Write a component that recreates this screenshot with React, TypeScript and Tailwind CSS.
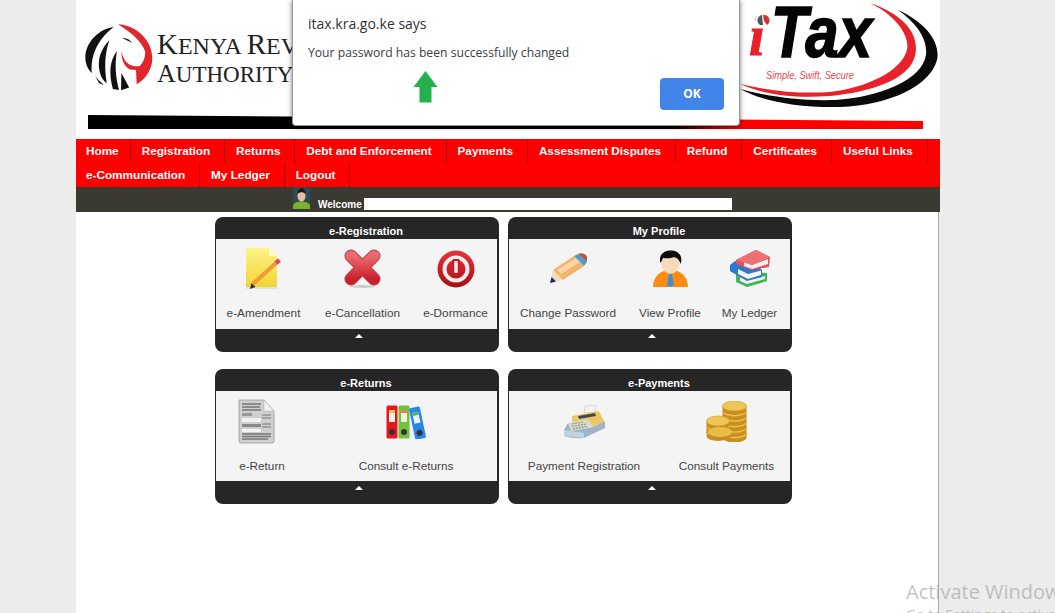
const navItems = [
  "Home",
  "Registration",
  "Returns",
  "Debt and Enforcement",
  "Payments",
  "Assessment Disputes",
  "Refund",
  "Certificates",
  "Useful Links",
  "e-Communication",
  "My Ledger",
  "Logout",
];

const KraLion = () => (
  <svg width="68" height="68" viewBox="28 68 200 200" className="shrink-0">
    <path
      d="M125,72 C180,75 226,120 226,172 C226,205 205,235 180,248 L178,206 L160,205 C145,195 135,180 135,150 C142,185 160,197 188,195 C200,185 205,170 205,152 C195,125 170,100 125,72 Z"
      fill="#e1252b"
    />
    <path d="M112,80 C70,85 29,125 29,170 C29,190 38,205 48,215 C45,175 55,125 112,80 Z" fill="#111" />
    <path d="M100,118 C75,145 62,175 72,215 C75,228 82,238 92,245 C85,200 85,160 100,118 Z" fill="#111" />
    <path d="M122,150 C100,180 98,215 110,262 L128,265 C118,225 115,190 122,150 Z" fill="#111" />
    <path d="M135,215 L134,266 L158,258 Z" fill="#111" />
    <path d="M58,225 L70,245 L84,250 C72,240 64,232 58,225 Z" fill="#111" />
    <path d="M138,112 C150,112 160,116 166,127 C156,120 148,118 138,112 Z" fill="#111" />
  </svg>
);

const ItaxLogo = () => (
  <svg width="200" height="115" viewBox="0 0 200 115" className="shrink-0">
    <path
      d="M130,3 C165,15 180,35 175,56 C169,80 130,92 90,96 C50,99 20,93 0,84 C30,91 60,94 90,92 C125,88 161,72 167,50 C170,35 155,15 130,3 Z"
      fill="#e8212b"
    />
    <path
      d="M158,10 C185,22 201,42 197,60 C190,86 150,105 100,107 C55,108 20,100 0,89 C30,97 60,101 95,100 C140,97 182,80 186,55 C188,38 175,22 158,10 Z"
      fill="#0a0a0a"
    />
    <text
      x="31"
      y="57"
      textLength="101"
      lengthAdjust="spacingAndGlyphs"
      fontSize="73"
      fontWeight="700"
      fontStyle="italic"
      fontFamily="'Liberation Sans', sans-serif"
      fill="#050505"
      stroke="#050505"
      strokeWidth="1.6"
    >
      Tax
    </text>
    <text
      x="9"
      y="55"
      fontSize="56"
      fontWeight="700"
      fontStyle="italic"
      fontFamily="'Liberation Serif', serif"
      fill="#e8212b"
      stroke="#e8212b"
      strokeWidth="1"
    >
      i
    </text>
    <circle cx="23" cy="20" r="7.5" fill="#fff" />
    <path d="M23,15 A5.5,5.5 0 0 1 27,25 L24,21 Z" fill="#c33" />
    <path d="M22,15 A5.5,5.5 0 0 0 20,25 L23,25 Z" fill="#555" />
    <text
      x="26"
      y="79"
      fontSize="10.5"
      fontStyle="italic"
      fontFamily="'Liberation Sans', sans-serif"
      fill="#e8454c"
      textLength="88"
      lengthAdjust="spacingAndGlyphs"
    >
      Simple, Swift, Secure
    </text>
  </svg>
);

const HeaderBar = () => (
  <svg width="836" height="16" viewBox="0 0 836 16" className="ml-[11px] block">
    <defs>
      <linearGradient id="barFill" x1="0" x2="1" y1="0" y2="0">
        <stop offset="0.7" stopColor="#000" />
        <stop offset="0.77" stopColor="#ff0000" />
        <stop offset="1" stopColor="#ff0000" />
      </linearGradient>
    </defs>
    <polygon points="1,0 836,6 836,14 1,14" fill="url(#barFill)" />
  </svg>
);

const NoteIcon = () => (
  <svg width="37" height="43" viewBox="0 0 37 43">
    <defs>
      <linearGradient id="noteFill" x1="0" x2="0" y1="0" y2="1">
        <stop offset="0" stopColor="#fdf38a" />
        <stop offset="1" stopColor="#f3d531" />
      </linearGradient>
    </defs>
    <path d="M1,1 H24 L32,9 V40 H1 Z" fill="url(#noteFill)" />
    <path d="M24,1 L32,9 H24 Z" fill="#fff9c4" />
    <path d="M1,41 H33" stroke="#ddd" strokeWidth="1.5" />
    <path d="M8,37 L32,15" stroke="#f29a38" strokeWidth="4" />
    <path d="M31,16 L34.5,13" stroke="#d8505c" strokeWidth="4.5" />
    <path d="M5,42 L6.5,36 L10.5,40 Z" fill="#333" />
  </svg>
);

const CrossIcon = () => (
  <svg width="37" height="39" viewBox="0 0 37 39">
    <defs>
      <linearGradient id="crossFill" x1="0" x2="0" y1="0" y2="1">
        <stop offset="0" stopColor="#ec6a70" />
        <stop offset="1" stopColor="#c9222c" />
      </linearGradient>
    </defs>
    <ellipse cx="18.5" cy="37.5" rx="13" ry="1.5" fill="#ccc" />
    <path d="M7,7 L30,30 M30,7 L7,30" stroke="#bb3a40" strokeWidth="13" strokeLinecap="round" />
    <path d="M7,7 L30,30 M30,7 L7,30" stroke="url(#crossFill)" strokeWidth="11" strokeLinecap="round" />
  </svg>
);

const PowerIcon = () => (
  <svg width="38" height="38" viewBox="0 0 38 38">
    <defs>
      <linearGradient id="powerFill" x1="0" x2="0" y1="0" y2="1">
        <stop offset="0" stopColor="#e8333a" />
        <stop offset="1" stopColor="#a50f14" />
      </linearGradient>
    </defs>
    <circle cx="19" cy="19" r="18.5" fill="url(#powerFill)" />
    <circle cx="19" cy="19" r="11.5" fill="none" stroke="#f8eeee" strokeWidth="4" />
    <rect x="15.5" y="9" width="7" height="15" rx="1" fill="#c21a20" />
    <rect x="17.2" y="11" width="3.6" height="12" rx="1" fill="#fbeaea" />
  </svg>
);

const PencilIcon = () => (
  <svg width="37" height="31" viewBox="0 0 37 31">
    <path d="M0,30 L3,17 L13,27 Z" fill="#f5dcb8" />
    <path d="M0,30 L1.5,24 L6,28.5 Z" fill="#1e2a5a" />
    <path d="M3,17 L24,3 L34,13 L13,27 Z" fill="#f4b36a" />
    <path d="M7,17 L26,5 L30,9 L11,21 Z" fill="#fbd5a2" />
    <path d="M24,3 L28,1 L37,9 L34,13 Z" fill="#4d9ad8" />
    <path d="M28,1 C32,-1 36,1 37,4 C37,6 37,8 37,9 Z" fill="#b5563c" />
  </svg>
);

const PersonIcon = () => (
  <svg width="35" height="38" viewBox="0 0 35 38">
    <path d="M0,37 C0,27 7,20 17.5,20 C28,20 35,27 35,37 Z" fill="#ff8a10" />
    <path d="M14,20 L21,20 L19,24 L21,35 L17.5,37 L14,35 L16,24 Z" fill="#3f8fd8" />
    <ellipse cx="17.5" cy="14" rx="9" ry="10" fill="#f6d9bb" />
    <path d="M7.5,13 C5,4 12,0 19,0.5 C27,1 30,8 27.5,14 C26,9 24,8 21,7 C17,9 12,8 10,8 C9,10 8.5,12 7.5,13 Z" fill="#0b0b0b" />
  </svg>
);

const BooksIcon = () => (
  <svg width="41" height="37" viewBox="0 0 41 37">
    <path d="M7,24 L11,21 L38,23 L38,31 L18,37 L7,32 Z" fill="#3db55a" />
    <path d="M11,27 L18,30 L36,26 V29 L18,34 L11,31 Z" fill="#eef3ee" />
    <path d="M1,15 L6,11 L30,17 L33,20 L33,27 L18,31 L1,21 Z" fill="#2a78cf" />
    <path d="M9,19 L19,24 L32,20.5 V25 L19,29 L9,24 Z" fill="#f3f5f8" />
    <path d="M7,10 L27,0 L41,7 L40,17 L22,20 L7,14 Z" fill="#e2505a" />
    <path d="M15,12 L23,15 L39,9 V14 L23,19 L15,16 Z" fill="#f7eeee" />
    <path d="M7,10 L27,0 L41,7 L23,15 Z" fill="#ef6f75" />
  </svg>
);

const DocumentIcon = () => (
  <svg width="37" height="45" viewBox="0 0 37 45">
    <path d="M1,1 H26 L36,12 V42 Q36,44 34,44 H3 Q1,44 1,42 Z" fill="#cfcfcf" stroke="#999" strokeWidth="0.8" />
    <path d="M26,1 L36,12 H26 Z" fill="#f2f2f2" stroke="#aaa" strokeWidth="0.5" />
    <path d="M4,5 H23 M4,8 H22 M4,11 H23" stroke="#777" strokeWidth="1.4" />
    <rect x="4" y="14" width="10" height="3" fill="#999" />
    <rect x="4" y="19" width="19" height="4" fill="#f2f2f2" />
    <rect x="4" y="25" width="19" height="3" fill="#888" />
    <rect x="4" y="30" width="19" height="3" fill="#f4f4f4" />
    <path d="M24,16 H33 M24,19 H33 M24,25 H33 M24,28 H33" stroke="#777" strokeWidth="1.2" />
    <path d="M4,35 H33 M4,37.5 H33 M4,40 H30" stroke="#777" strokeWidth="1.4" />
  </svg>
);

const BindersIcon = () => (
  <svg width="40" height="34" viewBox="0 0 40 34">
    <rect x="0.5" y="0.5" width="11" height="33" rx="1.5" fill="#e8161c" />
    <rect x="3" y="5" width="6" height="12" fill="#f4efe6" />
    <rect x="3" y="5" width="6" height="3" fill="#f4c050" />
    <circle cx="6" cy="27" r="3" fill="#333" />
    <rect x="12.5" y="0.5" width="11" height="33" rx="1.5" fill="#6fc43a" />
    <rect x="15" y="5" width="6" height="12" fill="#f1f1e8" />
    <rect x="15" y="5" width="6" height="3" fill="#ef7a60" />
    <circle cx="18" cy="27" r="3" fill="#333" />
    <g transform="rotate(-12 32 18)">
      <rect x="26" y="2" width="11" height="32" rx="1.5" fill="#2a86ea" />
      <rect x="28.5" y="7" width="6" height="11" fill="#eef3f4" />
      <rect x="28.5" y="7" width="6" height="3" fill="#52b848" />
      <circle cx="31.5" cy="28" r="3" fill="#333" />
    </g>
  </svg>
);

const RegisterIcon = () => (
  <svg width="41" height="34" viewBox="0 0 41 34">
    <path d="M20,8 L21,1 L32,0 L31,7 Z" fill="#f2f2ea" stroke="#bbb" strokeWidth="0.5" />
    <path d="M8,11 L35,6 L40,16 L40,22 L8,24 Z" fill="#ecc765" />
    <path d="M14,11 L31,8 L32,11 L15,14 Z" fill="#3e4a50" />
    <path d="M4,18 L24,14 L30,23 L6,27 Z" fill="#d8dcc8" />
    <path d="M8,19 L20,17 M8,21.5 L22,19 M9,24 L24,21" stroke="#8a9590" strokeWidth="1.2" strokeDasharray="2 1" />
    <path d="M0,25 L4,18 L7,26 L30,22 L41,16 V23 L20,33 Q8,34 0,31 Z" fill="#9cb4cc" />
    <path d="M0,31 V25 L20,28 V33 Z" fill="#c2d2e0" />
  </svg>
);

const CoinStack = ({ cx, top, count, rx }: { cx: number; top: number; count: number; rx: number }) => (
  <g>
    {Array.from({ length: count }).map((_, i) => {
      const y = top + (count - 1 - i) * 5.5;
      return (
        <g key={i}>
          <path
            d={`M${cx - rx},${y} V${y + 4} A${rx},5 0 0 0 ${cx + rx},${y + 4} V${y} Z`}
            fill="#c98f1e"
          />
          <ellipse cx={cx} cy={y} rx={rx} ry="5" fill="#efc656" stroke="#d49f2c" strokeWidth="0.6" />
        </g>
      );
    })}
  </g>
);

const CoinsIcon = () => (
  <svg width="41" height="41" viewBox="0 0 41 41">
    <CoinStack cx={28.5} top={5} count={6} rx={12} />
    <CoinStack cx={12} top={20} count={3} rx={11.5} />
    <g>
      <path d="M2,31 V34 A12,5 0 0 0 26,34 V31 Z" fill="#c98f1e" />
      <ellipse cx="14" cy="31" rx="12" ry="5" fill="#e9bb48" />
    </g>
  </svg>
);

const Avatar = () => (
  <svg width="17" height="22" viewBox="0 0 17 22" className="shrink-0">
    <rect width="17" height="22" fill="#2f4a52" />
    <path d="M0,22 V18 C2,15 5,14.5 8.5,14.5 C12,14.5 15,15 17,18 V22 Z" fill="#7cb12f" />
    <ellipse cx="8.5" cy="9" rx="4" ry="5.5" fill="#e8bfa0" />
    <path d="M4.5,7 C5,2 8,1 9,1 C12,2 12.5,5 12.5,7 C10,4.5 7,4.5 4.5,7 Z" fill="#1a1a1a" />
  </svg>
);

type Tile = { label: string; icon: React.ReactNode; iconClass?: string };

const Card = ({
  title,
  cols,
  tiles,
  bodyClass,
  lastPad,
}: {
  title: string;
  cols: string;
  tiles: Tile[];
  bodyClass?: string;
  lastPad?: string;
}) => (
  <div className="w-[284px] rounded-lg bg-[#262626] overflow-hidden">
    <div className="h-[22px] pl-[18px] pt-[7px] text-center text-[11px] leading-[15px] font-bold text-white">{title}</div>
    <div className={`h-[90px] grid ml-px mr-[2px] bg-[#f4f4f4] ${cols} ${bodyClass ?? ""}`}>
      {tiles.map((t, i) => (
        <div key={t.label} className={`flex flex-col items-center whitespace-nowrap ${i === tiles.length - 1 ? lastPad ?? "" : ""}`}>
          <div className={`h-[59px] flex items-center justify-center ${t.iconClass ?? ""}`}>{t.icon}</div>
          <span className="mt-[7px] text-[11.75px] leading-[15px] text-[#444]">{t.label}</span>
        </div>
      ))}
    </div>
    <div className="h-[23px] pl-[4px] pt-[5px] flex justify-center">
      <div className="w-0 h-0 border-x-[4px] border-x-transparent border-b-[4px] border-b-white" />
    </div>
  </div>
);

export default function App() {
  return (
    <div className="relative h-screen overflow-hidden bg-[#ececec] font-['Liberation_Sans',Arial,sans-serif]">
      <div className="ml-[76px] w-[864px]">
        <header className="h-[139px] bg-white overflow-hidden">
          <div className="h-[115px] flex justify-between">
            <div className="pl-[9px] pt-[23px] flex gap-[4px] font-['Liberation_Serif',serif] text-[#222] whitespace-nowrap">
              <KraLion />
              <div className="pt-[8px] text-[24px] leading-[27px]">
                <div>
                  <span className="text-[29px]">K</span>ENYA <span className="text-[29px]">R</span>EVENUE
                </div>
                <div>
                  <span className="text-[26px]">A</span>
                  <span className="text-[23px]">UTHORITY</span>
                </div>
              </div>
            </div>
            <ItaxLogo />
          </div>
          <HeaderBar />
        </header>

        <nav className="bg-[#ff0000] flex flex-wrap">
          {navItems.map((item) => (
            <a
              key={item}
              className="h-6 pl-[11px] pr-[13.85px] first:pl-[10px] first:pr-[11px] nth-[10]:pl-[10px] border-r border-[#a80000] text-[11.75px] leading-6 font-bold text-white"
            >
              {item}
            </a>
          ))}
        </nav>

        <div className="h-[25px] bg-[#3a3a32] flex pl-[217px]">
          <Avatar />
          <div className="ml-2 mt-[11px] flex h-3 items-end">
            <span className="mb-[-1px] text-[10px] leading-3 font-bold text-white">Welcome</span>
            <div className="ml-[2px] w-[368px] h-3 bg-white" />
          </div>
        </div>

        <main className="w-[863px] h-[401px] bg-white border-r border-[#aaa] pl-[139px] pt-[5px]">
          <div className="grid grid-cols-[284px_284px] gap-x-[9px] gap-y-[17px]">
            <Card
              title="e-Registration"
              cols="grid-cols-[95px_103px_83px]"
              tiles={[
                { label: "e-Amendment", icon: <NoteIcon /> },
                { label: "e-Cancellation", icon: <CrossIcon /> },
                { label: "e-Dormance", icon: <PowerIcon /> },
              ]}
            />
            <Card
              title="My Profile"
              cols="grid-cols-[118px_86px_73px]"
              tiles={[
                { label: "Change Password", icon: <PencilIcon /> },
                { label: "View Profile", icon: <PersonIcon /> },
                { label: "My Ledger", icon: <BooksIcon /> },
              ]}
            />
            <Card
              title="e-Returns"
              cols="grid-cols-[92px_189px]"
              bodyClass="pt-px"
              lastPad="pl-[7px]"
              tiles={[
                { label: "e-Return", icon: <DocumentIcon />, iconClass: "-ml-3" },
                { label: "Consult e-Returns", icon: <BindersIcon /> },
              ]}
            />
            <Card
              title="e-Payments"
              cols="grid-cols-[150px_131px]"
              bodyClass="pt-px"
              lastPad="pl-[4px]"
              tiles={[
                { label: "Payment Registration", icon: <RegisterIcon /> },
                { label: "Consult Payments", icon: <CoinsIcon /> },
              ]}
            />
          </div>
        </main>
      </div>

      {/* browser alert */}
      <div className="absolute left-[292px] top-0 w-[448px] h-[126px] bg-white rounded-b-[4px] border border-t-0 border-[#999] shadow-[0_1px_5px_rgba(0,0,0,0.55)] font-['Open_Sans',sans-serif]">
        <div className="absolute left-[15px] top-[14px] text-sm leading-5 text-[#333]">itax.kra.go.ke says</div>
        <div className="absolute left-[15px] top-[44px] text-[12.17px] leading-[18px] text-[#3c4043]">
          Your password has been successfully changed
        </div>
        <svg width="25" height="32" viewBox="0 0 25 32" className="absolute left-[120px] top-[71px]">
          <polygon points="12.5,0 24.5,16 18.5,16 18.5,31.5 6.5,31.5 6.5,16 0.5,16" fill="#22b14c" />
        </svg>
        <button className="absolute left-[367px] top-[78px] w-[64px] h-[32px] rounded-[4px] bg-[#4285e8] text-xs font-bold text-white">
          OK
        </button>
      </div>

      {/* windows watermark */}
      <div className="absolute left-[906px] top-[578px] whitespace-nowrap font-['Open_Sans',sans-serif] text-[#9c9c9c]/60">
        <div className="text-[20px] leading-[27px]">Activate Windows</div>
        <div className="text-sm leading-5">Go to Settings to activate Windows.</div>
      </div>
    </div>
  );
}
